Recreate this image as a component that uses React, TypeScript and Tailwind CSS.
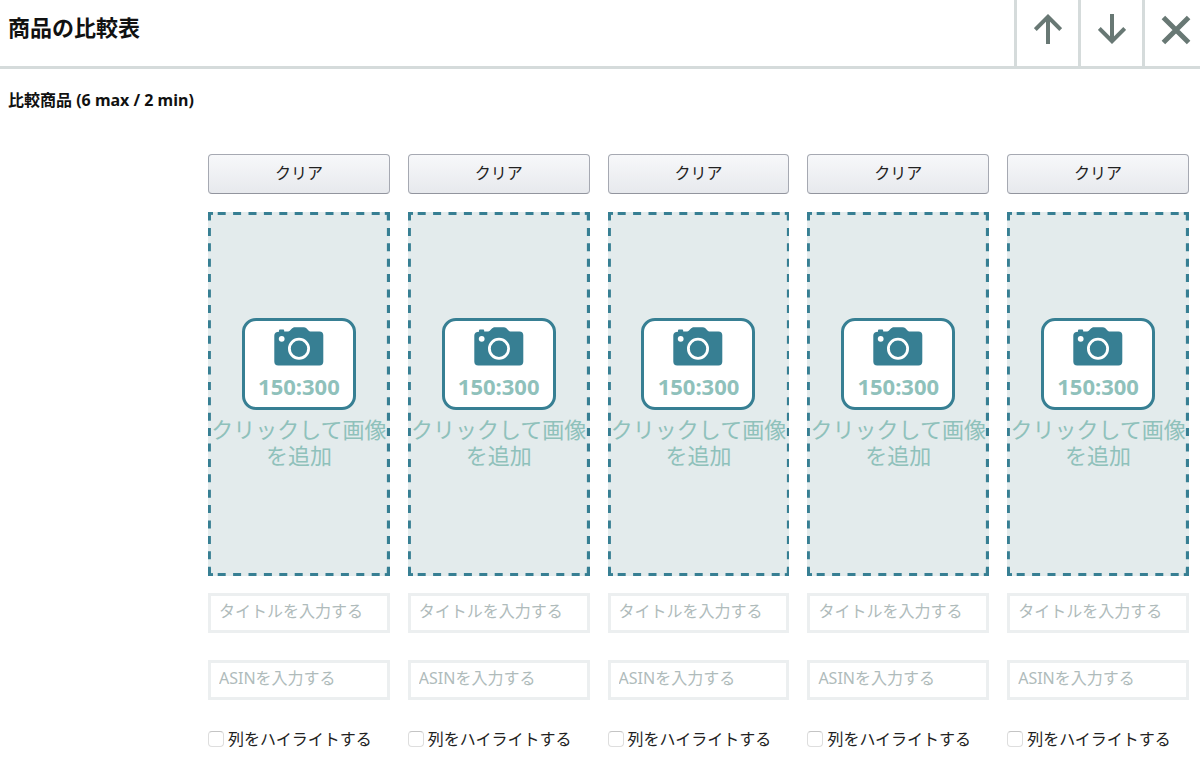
import { useState } from "react";

const columns = [1, 2, 3, 4, 5];

function ArrowUp() {
  return (
    <svg width="28" height="30" viewBox="0 0 28 30" fill="none" stroke="#687874" strokeWidth="4" aria-hidden="true">
      <path d="M14 30V3M1.3 15.5 14 2.8 26.7 15.5" />
    </svg>
  );
}

function Cross() {
  return (
    <svg width="30" height="30" viewBox="0 0 30 30" fill="none" stroke="#687874" strokeWidth="5" aria-hidden="true">
      <path d="M2.400 2.400 27.600 27.600M27.600 2.400 2.400 27.600" />
    </svg>
  );
}

function Camera() {
  return (
    <svg width="50" height="39" viewBox="0 0 50 39" aria-hidden="true">
      <path
        fill="#377f93"
        d="M5 4.800V3.500C5 2.800 5.500 2.400 6.200 2.400H9C9.700 2.400 10.200 2.800 10.200 3.500V4.500H13.500C14.600 4.500 15.300 4.100 16 3.400L18.200 1.300C19 .6 19.800 .2 21 .2H29.500C30.700 .2 31.600 .6 32.400 1.300L34.500 3.400C35.200 4.100 35.900 4.600 36.900 4.600H45.500C48 4.600 49.300 6 49.300 8.300V34.500C49.300 37 48 38.400 45.500 38.400H4.200C1.700 38.400 .3 37 .3 34.500V8.800C.3 6.300 2 4.900 5 4.800Z"
      />
      <circle cx="7.700" cy="11.800" r="2.900" fill="#fff" />
      <circle cx="25" cy="21.700" r="9.600" fill="none" stroke="#fff" strokeWidth="2.800" />
    </svg>
  );
}

function DashedFrame() {
  return (
    <svg className="pointer-events-none absolute inset-0 h-full w-full" stroke="#377f93" strokeWidth="5.800" fill="none" aria-hidden="true">
      <g strokeDasharray="8 7.400" strokeDashoffset="5.700">
        <line x1="0" y1="0" x2="100%" y2="0" />
        <line x1="0" y1="100%" x2="100%" y2="100%" />
      </g>
      <g strokeDasharray="8 7.400" strokeDashoffset="-0.500">
        <line x1="0" y1="0" x2="0" y2="100%" />
        <line x1="100%" y1="0" x2="100%" y2="100%" />
      </g>
      <g strokeDasharray="5 9999">
        <line x1="0" y1="0" x2="100%" y2="0" />
        <line x1="100%" y1="0" x2="0" y2="0" />
        <line x1="0" y1="100%" x2="100%" y2="100%" />
        <line x1="100%" y1="100%" x2="0" y2="100%" />
      </g>
      <g strokeDasharray="8 9999">
        <line x1="0" y1="0" x2="0" y2="100%" />
        <line x1="100%" y1="0" x2="100%" y2="100%" />
        <line x1="0" y1="100%" x2="0" y2="0" />
        <line x1="100%" y1="100%" x2="100%" y2="0" />
      </g>
    </svg>
  );
}

const field =
  "h-10 w-full border-[3px] border-[#eceff0] bg-white px-2 pb-1 text-base text-[#222] outline-none placeholder:text-[#afbbbb] placeholder:opacity-100 focus:border-[#377f93]";

function ProductColumn({ index }: { index: number }) {
  const [title, setTitle] = useState("");
  const [asin, setAsin] = useState("");
  const [highlight, setHighlight] = useState(false);
  const clear = () => {
    setTitle("");
    setAsin("");
    setHighlight(false);
  };

  return (
    <div className="flex min-w-0 flex-1 flex-col">
      <button
        type="button"
        onClick={clear}
        className="h-10 rounded-[4px] border border-[#a6a9b2] border-b-[#92959e] bg-linear-to-b from-[#f7f8fa] to-[#e7e9ed] pb-[2px] text-base text-[#222]"
      >
        クリア
      </button>
      <button
        type="button"
        className="relative mt-[18px] flex h-[364px] flex-col items-center justify-center bg-[#e3ebec] pb-[2px] text-[#8fc1bb]"
      >
        <DashedFrame />
        <span className="flex h-[92px] w-[114px] flex-col items-center rounded-[14px] border-[3px] border-[#377f93] bg-white pt-[6px]">
          <Camera />
          <span className="mt-1 text-[22px] leading-[32px] font-bold">150:300</span>
        </span>
        <span className="mt-[6px] text-[22px] leading-[26px]">クリックして画像を追加</span>
      </button>
      <input
        type="text"
        aria-label={`タイトル ${index}`}
        placeholder="タイトルを入力する"
        value={title}
        onChange={(e) => setTitle(e.target.value)}
        className={`mt-[17px] ${field}`}
      />
      <input
        type="text"
        aria-label={`ASIN ${index}`}
        placeholder="ASINを入力する"
        value={asin}
        onChange={(e) => setAsin(e.target.value)}
        className={`mt-[27px] ${field}`}
      />
      <label className="mt-[27px] flex items-center gap-1 text-base leading-6 whitespace-nowrap text-[#222]">
        <input
          type="checkbox"
          checked={highlight}
          onChange={(e) => setHighlight(e.target.checked)}
          className="size-4 shrink-0 appearance-none rounded-[4px] border border-[#dedede] border-t-[#c4c4c4] bg-white checked:bg-[#377f93]"
        />
        列をハイライトする
      </label>
    </div>
  );
}

export default function App() {
  const tool = "flex h-full w-16 items-center justify-center pb-2";
  return (
    <main className="min-h-screen bg-white font-['Noto_Sans','Noto_Sans_CJK_JP',sans-serif] text-[#111]" lang="ja">
      <header className="flex h-[69px] border-b-[3px] border-[#d5dbdb]">
        <h1 className="flex-1 pt-[11px] pl-2 text-[22px] leading-8 font-bold">商品の比較表</h1>
        <div className="flex divide-x-[3px] divide-[#d5dbdb] border-l-[3px] border-[#d5dbdb]">
          <button type="button" aria-label="上へ移動" className={tool}>
            <ArrowUp />
          </button>
          <button type="button" aria-label="下へ移動" className={tool}>
            <span className="rotate-180">
              <ArrowUp />
            </span>
          </button>
          <button type="button" aria-label="閉じる" className="flex h-full w-[55px] items-center justify-end pr-[9px] pb-[6px]">
            <Cross />
          </button>
        </div>
      </header>
      <h2 className="mt-[19px] pl-2 text-base leading-6 font-bold">比較商品 (6 max / 2 min)</h2>
      <section className="mt-[42px] flex gap-[18px] pr-[11px] pb-4 pl-[208px]">
        {columns.map((c) => (
          <ProductColumn key={c} index={c} />
        ))}
      </section>
    </main>
  );
}
